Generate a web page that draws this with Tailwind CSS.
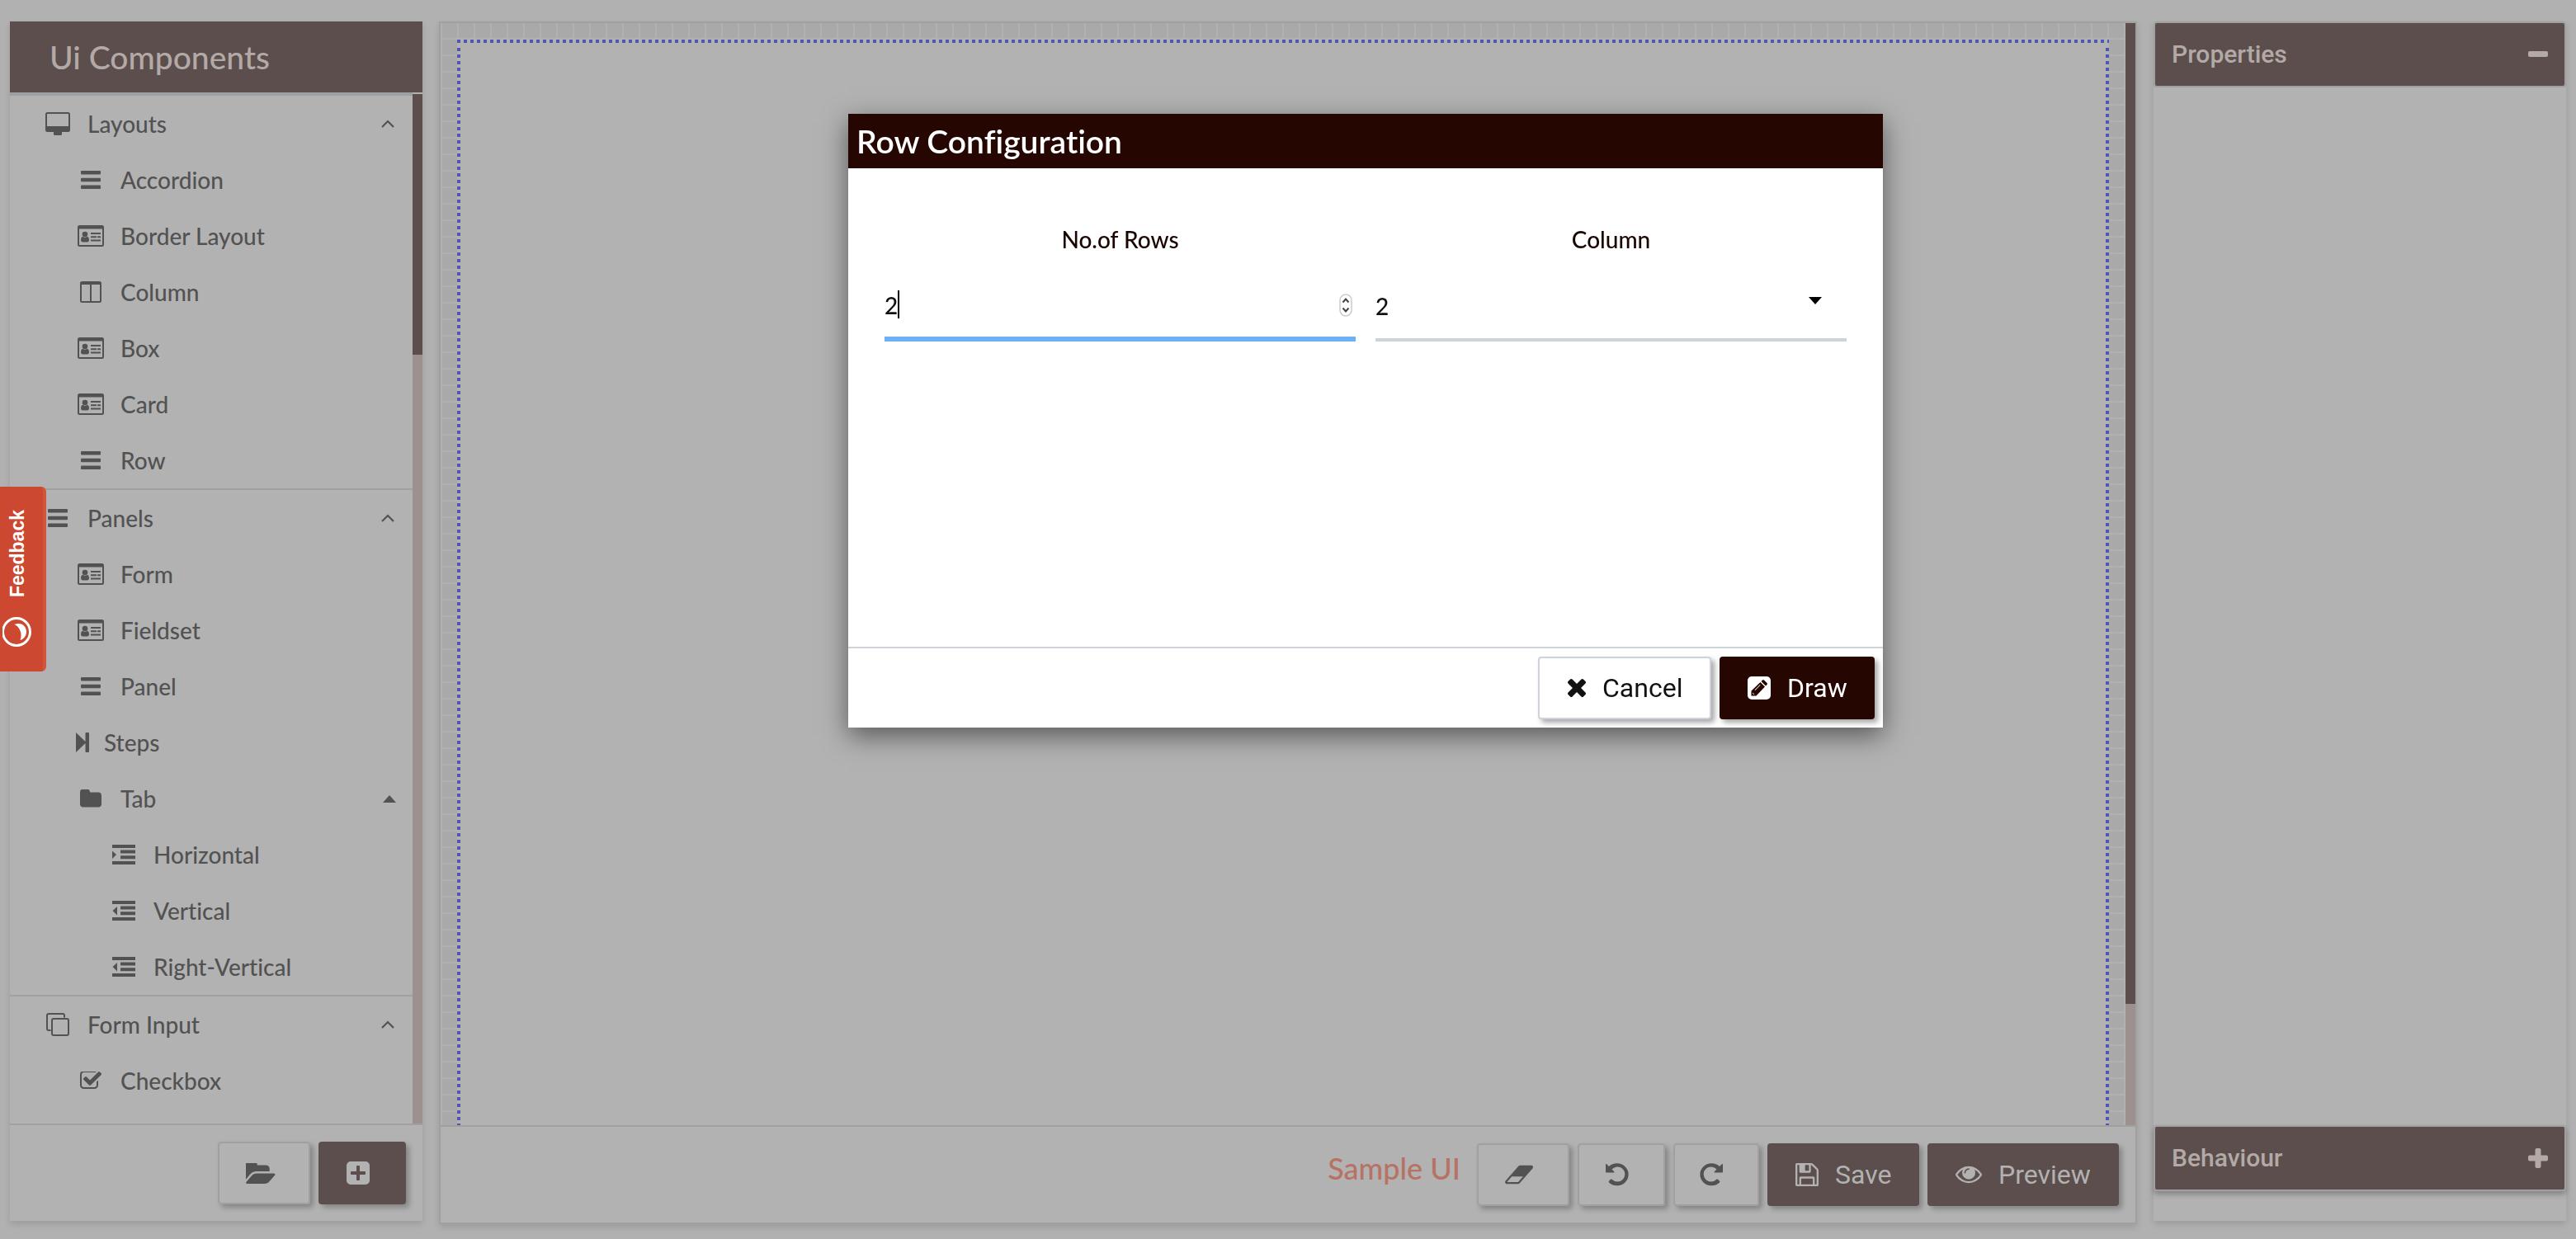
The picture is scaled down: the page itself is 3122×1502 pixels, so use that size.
<!DOCTYPE html>
<html lang="en">
<head>
<meta charset="utf-8">
<title>Ui Components</title>
<script src="https://cdn.jsdelivr.net/npm/@tailwindcss/browser@4"></script>
</head>
<body class="h-screen overflow-hidden bg-[#b1b1b1] font-['Lato',sans-serif] text-[28px] leading-9 font-medium text-[#525252] [font-variant-ligatures:none]">

<svg class="hidden" aria-hidden="true">
  <symbol id="bars" viewBox="0 0 24 24"><rect y="1" width="24" height="4.4" rx="1"/><rect y="9.8" width="24" height="4.4" rx="1"/><rect y="18.6" width="24" height="4.4" rx="1"/></symbol>
  <symbol id="desktop" viewBox="0 0 30 28"><path fill-rule="evenodd" d="M2.5 0h25A2.5 2.5 0 0 1 30 2.500v19a2.500 2.500 0 0 1-2.500 2.500H20v2.500q0 1.500-1.500 1.500h-7q-1.500 0-1.500-1.500V24H2.500A2.500 2.500 0 0 1 0 21.500v-19A2.500 2.500 0 0 1 2.500 0zM2.500 2q-.5 0-.5.500V17h26V2.500q0-.5-.5-.5z"/></symbol>
  <symbol id="card" viewBox="0 0 32 26"><path fill-rule="evenodd" d="M2.500 0h27A2.500 2.500 0 0 1 32 2.500v21a2.500 2.500 0 0 1-2.500 2.500h-27A2.500 2.500 0 0 1 0 23.500v-21A2.500 2.500 0 0 1 2.500 0zM2 4.500V23.500q0 .5.5.5h27q.5 0 .5-.5v-19z"/><circle cx="9" cy="11" r="3.300"/><path d="M6.200 13.800q2.800 2 5.600 0 2.200.7 2.200 3.700 0 3-2.500 3h-5Q4 20.500 4 17.500q0-3 2.200-3.700zM16 9h12v2H16zM16 13.300h7v2h-7zM24 13.300h4v2h-4zM16 17.500h12v2H16z"/></symbol>
  <symbol id="columns" viewBox="0 0 26 26"><path fill-rule="evenodd" d="M2.500 0h21A2.500 2.500 0 0 1 26 2.500v21a2.500 2.500 0 0 1-2.500 2.500h-21A2.500 2.500 0 0 1 0 23.500v-21A2.500 2.500 0 0 1 2.500 0zM2 4V23.500q0 .5.500.500h9.500V4zM14 4v20h9.500q.5 0 .5-.5V4z"/></symbol>
  <symbol id="step" viewBox="0 0 16 24"><path d="M0 0l11.500 11V1q0-1 1-1H15q1 0 1 1v22q0 1-1 1h-2.500q-1 0-1-1V13L0 24z"/></symbol>
  <symbol id="folder" viewBox="64 192 1664 1344"><path d="M1728 608v704q0 92-66 158t-158 66h-1216q-92 0-158-66t-66-158v-960q0-92 66-158t158-66h320q92 0 158 66t66 158v32h672q92 0 158 66t66 158z"/></symbol>
  <symbol id="indent" viewBox="0 0 28 24"><path d="M0 0h28v4H0zM10 6.600h18v4H10zM10 13.300h18v4H10zM0 20h28v4H0zM0 7.500l5 4.500-5 5z"/></symbol>
  <symbol id="outdent" viewBox="0 0 28 24"><path d="M0 0h28v4H0zM10 6.600h18v4H10zM10 13.300h18v4H10zM0 20h28v4H0zM6 7v10.500L.5 12z"/></symbol>
  <symbol id="clone" viewBox="0 0 28 28"><path fill="none" stroke="currentColor" stroke-width="2" d="M5.500 21H3q-2 0-2-2V3q0-2 2-2h17q2 0 2 2v2.500M9 7h16q2 0 2 2v16q0 2-2 2H9q-2 0-2-2V9q0-2 2-2z"/></symbol>
  <symbol id="check" viewBox="64 256 1664 1280"><path d="M1472 930v318q0 119-84.500 203.500t-203.500 84.500h-832q-119 0-203.500-84.500t-84.500-203.500v-832q0-119 84.500-203.500t203.500-84.500h832q63 0 117 25 15 7 18 23 3 17-9 29l-49 49q-10 10-23 10-3 0-9-2-23-6-45-6h-832q-66 0-113 47t-47 113v832q0 66 47 113t113 47h832q66 0 113-47t47-113v-254q0-13 9-22l64-64q10-10 23-10 6 0 12 3 20 8 20 29zm231-489l-814 814q-24 24-57 24t-57-24l-430-430q-24-24-24-57t24-57l110-110q24-24 57-24t57 24l263 263 647-647q24-24 57-24t57 24l110 110q24 24 24 57t-24 57z"/></symbol>
  <symbol id="chevron" viewBox="0 0 16 10"><path fill="none" stroke="currentColor" stroke-width="2.200" d="M1 9l7-7 7 7"/></symbol>
  <symbol id="folder-open" viewBox="0 256 1844 1280"><path d="M1815 952q0 31-31 66l-336 396q-43 51-120.500 86.500t-143.500 35.500h-1088q-34 0-60.500-13t-26.500-43q0-31 31-66l336-396q43-51 120.500-86.500t143.500-35.500h1088q34 0 60.500 13t26.500 43zm-343-344v160h-832q-94 0-197 47.500t-164 119.500l-337 396-5 6q0-4-.5-12.500t-.5-12.500v-960q0-92 66-158t158-66h320q92 0 158 66t66 158v32h544q92 0 158 66t66 158z"/></symbol>
  <symbol id="plus-square" viewBox="0 0 28 28"><path fill-rule="evenodd" d="M5 0h18a5 5 0 0 1 5 5v18a5 5 0 0 1-5 5H5a5 5 0 0 1-5-5V5a5 5 0 0 1 5-5zM12 6v6H6q-1 0-1 1v2q0 1 1 1h6v6q0 1 1 1h2q1 0 1-1v-6h6q1 0 1-1v-2q0-1-1-1h-6V6q0-1-1-1h-2q-1 0-1 1z"/></symbol>
  <symbol id="eraser" viewBox="58 256 1926 1280"><path d="M960 1408l336-384h-768l-336 384h768zm1013-1077q15 34 9.500 71.500t-30.500 65.500l-896 1024q-38 44-96 44h-768q-38 0-69.500-20.500t-47.500-54.500q-15-34-9.500-71.500t30.500-65.500l896-1024q38-44 96-44h768q38 0 69.500 20.500t47.500 54.500z"/></symbol>
  <symbol id="undo" viewBox="0 0 28 28"><path d="M0 1.800Q0 .3 1.200 1.300L4 4A14 13.500 0 1 1 4.200 23.800Q3 22.600 4.200 21.400L6 19.700Q7 18.900 8 19.900A9 9 0 1 0 7.500 7.600L10 10Q11 11.500 9.500 11.500H1Q0 11.500 0 10.500z"/></symbol>
  <symbol id="save" viewBox="128 128 1536 1536"><path d="M512 1536h768v-384h-768v384zm896 0h128v-896q0-14-10-38.500t-20-34.500l-281-281q-10-10-34-20t-39-10v416q0 40-28 68t-68 28h-576q-40 0-68-28t-28-68v-416h-128v1280h128v-416q0-40 28-68t68-28h832q40 0 68 28t28 68v416zm-384-928v-320q0-13-9.500-22.500t-22.500-9.500h-192q-13 0-22.500 9.500t-9.500 22.500v320q0 13 9.500 22.500t22.500 9.500h192q13 0 22.500-9.500t9.500-22.500zm640 32v928q0 40-28 68t-68 28h-1344q-40 0-68-28t-28-68v-1344q0-40 28-68t68-28h928q40 0 88 20t76 48l280 280q28 28 48 76t20 88z"/></symbol>
  <symbol id="eye" viewBox="0 384 1792 1152"><path d="M1664 960q-152-236-381-353 61 104 61 225 0 185-131.500 316.500t-316.500 131.500-316.500-131.500-131.500-316.500q0-121 61-225-229 117-381 353 133 205 333.500 326.500t434.500 121.500 434.500-121.500 333.500-326.500zm-720-384q0-20-14-34t-34-14q-125 0-214.500 89.500t-89.500 214.500q0 20 14 34t34 14 34-14 14-34q0-86 61-147t147-61q20 0 34-14t14-34zm848 384q0 34-20 69-140 230-376.500 368.500t-499.500 138.500-499.500-139-376.500-368q-20-35-20-69t20-69q140-229 376.500-368t499.500-139 499.500 139 376.500 368q20 35 20 69z"/></symbol>
  <symbol id="times" viewBox="302 366 1188 1188"><path d="M1490 1322q0 40-28 68l-136 136q-28 28-68 28t-68-28l-294-294-294 294q-28 28-68 28t-68-28l-136-136q-28-28-28-68t28-68l294-294-294-294q-28-28-28-68t28-68l136-136q28-28 68-28t68 28l294 294 294-294q28-28 68-28t68 28l136 136q28 28 28 68t-28 68l-294 294 294 294q28 28 28 68z"/></symbol>
  <symbol id="pencil" viewBox="0 0 28 28"><path fill-rule="evenodd" d="M5 0h18a5 5 0 0 1 5 5v18a5 5 0 0 1-5 5H5a5 5 0 0 1-5-5V5a5 5 0 0 1 5-5zM4.500 17.500V23.500h6L21 12.500 15.500 7zM16.500 6L22 11.500l1.500-1.500q1-1 0-2L20 4.500q-1-1-2 0zM6 19.500l2.500 2.500H7.500l-1.500-1.500zM8.500 16.500l6.500-6.500.6.600-6.500 6.500z"/></symbol>
</svg>

<div class="flex h-full gap-5 px-3 pt-[26px] pb-[18px]">

  <!-- Component palette -->
  <aside class="mb-1 flex w-[500px] shrink-0 flex-col bg-[#b2b2b2] shadow-[0_4px_8px_rgba(0,0,0,0.12)]">
    <h1 class="bg-[#5c4e4c] px-12 py-[19px] text-[39px] leading-[48px] text-[#b3aaa8]">Ui Components</h1>
    <div class="flex min-h-0 flex-1">
      <nav class="min-w-0 flex-1 overflow-hidden border-t-4 border-[#9da0a2]">
        <section>
          <a href="#" class="flex h-[68px] items-center gap-[18px] pr-[22px] pl-10"><span class="flex w-9 justify-center"><svg class="h-7 w-[30px] fill-current"><use href="#desktop"/></svg></span>Layouts<svg class="ml-auto h-2.5 w-4"><use href="#chevron"/></svg></a>
          <a href="#" class="flex h-[68px] items-center gap-[18px] pl-20"><span class="flex w-9 justify-center"><svg class="size-6 fill-current"><use href="#bars"/></svg></span>Accordion</a>
          <a href="#" class="flex h-[68px] items-center gap-[18px] pl-20"><span class="flex w-9 justify-center"><svg class="h-[26px] w-8 fill-current"><use href="#card"/></svg></span>Border Layout</a>
          <a href="#" class="flex h-[68px] items-center gap-[18px] pl-20"><span class="flex w-9 justify-center"><svg class="size-[26px] fill-current"><use href="#columns"/></svg></span>Column</a>
          <a href="#" class="flex h-[68px] items-center gap-[18px] pl-20"><span class="flex w-9 justify-center"><svg class="h-[26px] w-8 fill-current"><use href="#card"/></svg></span>Box</a>
          <a href="#" class="flex h-[68px] items-center gap-[18px] pl-20"><span class="flex w-9 justify-center"><svg class="h-[26px] w-8 fill-current"><use href="#card"/></svg></span>Card</a>
          <a href="#" class="flex h-[68px] items-center gap-[18px] pl-20"><span class="flex w-9 justify-center"><svg class="size-6 fill-current"><use href="#bars"/></svg></span>Row</a>
        </section>
        <section class="border-t-2 border-[#a0a0a0]">
          <a href="#" class="flex h-[68px] items-center gap-[18px] pr-[22px] pl-10"><span class="flex w-9 justify-center"><svg class="size-6 fill-current"><use href="#bars"/></svg></span>Panels<svg class="ml-auto h-2.5 w-4"><use href="#chevron"/></svg></a>
          <a href="#" class="flex h-[68px] items-center gap-[18px] pl-20"><span class="flex w-9 justify-center"><svg class="h-[26px] w-8 fill-current"><use href="#card"/></svg></span>Form</a>
          <a href="#" class="flex h-[68px] items-center gap-[18px] pl-20"><span class="flex w-9 justify-center"><svg class="h-[26px] w-8 fill-current"><use href="#card"/></svg></span>Fieldset</a>
          <a href="#" class="flex h-[68px] items-center gap-[18px] pl-20"><span class="flex w-9 justify-center"><svg class="size-6 fill-current"><use href="#bars"/></svg></span>Panel</a>
          <a href="#" class="flex h-[68px] items-center gap-[18px] pl-20"><svg class="h-6 w-4 fill-current"><use href="#step"/></svg>Steps</a>
          <a href="#" class="flex h-[68px] items-center gap-[18px] pr-5 pl-20"><span class="flex w-9 justify-center"><svg class="h-[22px] w-[26px] fill-current"><use href="#folder"/></svg></span>Tab<svg class="ml-auto h-[9px] w-4 fill-current" viewBox="0 0 16 9"><path d="M8 0l8 9H0z"/></svg></a>
          <a href="#" class="flex h-[68px] items-center gap-[18px] pl-[120px]"><span class="flex w-9 justify-center"><svg class="h-6 w-7 fill-current"><use href="#indent"/></svg></span>Horizontal</a>
          <a href="#" class="flex h-[68px] items-center gap-[18px] pl-[120px]"><span class="flex w-9 justify-center"><svg class="h-6 w-7 fill-current"><use href="#outdent"/></svg></span>Vertical</a>
          <a href="#" class="flex h-[68px] items-center gap-[18px] pl-[120px]"><span class="flex w-9 justify-center"><svg class="h-6 w-7 fill-current"><use href="#outdent"/></svg></span>Right-Vertical</a>
        </section>
        <section class="border-t-2 border-[#a0a0a0]">
          <a href="#" class="flex h-[68px] items-center gap-[18px] pr-[22px] pl-10"><span class="flex w-9 justify-center"><svg class="size-7"><use href="#clone"/></svg></span>Form Input<svg class="ml-auto h-2.5 w-4"><use href="#chevron"/></svg></a>
          <a href="#" class="flex h-[68px] items-center gap-[18px] pl-20"><span class="flex w-9 justify-center"><svg class="h-[22px] w-[26px] fill-current"><use href="#check"/></svg></span>Checkbox</a>
        </section>
      </nav>
      <div class="mt-0.5 w-3 bg-[#9c918f]"><div class="h-[316px] bg-[#5c4e4c]"></div></div>
    </div>
    <footer class="flex justify-end gap-2.5 border-t-2 border-[#a0a0a0] p-5">
      <button aria-label="Open" class="flex h-[76px] w-28 items-center rounded border-2 border-[#a0a0a0] pl-8 shadow-[4px_4px_6px_rgba(0,0,0,0.25)]"><svg class="h-[25px] w-9 fill-current"><use href="#folder-open"/></svg></button>
      <button aria-label="Add" class="flex h-[76px] w-[106px] items-center rounded bg-[#5c4e4c] pl-[34px] text-[#b2b2b2] shadow-[4px_4px_6px_rgba(0,0,0,0.25)]"><svg class="size-7 fill-current"><use href="#plus-square"/></svg></button>
    </footer>
  </aside>

  <!-- Design canvas -->
  <main class="flex min-w-0 flex-1 flex-col border-2 border-[#a0a0a0] bg-[#b2b2b2] shadow-[0_4px_8px_rgba(0,0,0,0.12)]">
    <div class="flex min-h-0 flex-1">
      <div class="flex flex-1 flex-col bg-[#a9a9a9] bg-[linear-gradient(90deg,#b1b1b1_2px,transparent_2px),linear-gradient(180deg,transparent_18px,#b1b1b1_18px)] bg-[size:20px_20px] px-5 pt-5">
        <div class="flex flex-1 flex-col bg-[#b2b2b2]">
          <div class="h-1 bg-[repeating-linear-gradient(90deg,#4c58b4_0_4px,transparent_4px_8px)]"></div>
          <div class="mt-0.5 flex flex-1 justify-between">
            <div class="w-1 bg-[repeating-linear-gradient(180deg,transparent_0_4px,#4c58b4_4px_8px)]"></div>
            <div class="w-1 bg-[repeating-linear-gradient(180deg,transparent_0_4px,#4c58b4_4px_8px)]"></div>
          </div>
        </div>
      </div>
      <div class="w-3 bg-[#9c918f]"><div class="h-[89%] bg-[#5c4e4c]"></div></div>
    </div>
    <footer class="flex justify-end gap-2.5 border-t-2 border-[#a0a0a0] p-5 font-[Roboto,sans-serif] text-[32px] font-normal">
      <span class="mr-2.5 pt-2 font-['Lato',sans-serif] text-[36px] leading-[44px] font-medium text-[#b67365]">Sample UI</span>
      <button aria-label="Clear" class="flex h-[76px] w-28 items-center rounded border-2 border-[#a0a0a0] pl-8 shadow-[4px_4px_6px_rgba(0,0,0,0.25)]"><svg class="h-6 w-[34px] fill-current"><use href="#eraser"/></svg></button>
      <button aria-label="Undo" class="flex h-[76px] w-[106px] items-center rounded border-2 border-[#a0a0a0] pl-8 shadow-[4px_4px_6px_rgba(0,0,0,0.25)]"><svg class="size-7 fill-current"><use href="#undo"/></svg></button>
      <button aria-label="Redo" class="flex h-[76px] w-[104px] items-center rounded border-2 border-[#a0a0a0] pl-[30px] shadow-[4px_4px_6px_rgba(0,0,0,0.25)]"><svg class="size-7 -scale-x-100 fill-current"><use href="#undo"/></svg></button>
      <button class="flex h-[76px] w-[184px] items-center gap-5 rounded bg-[#5c4e4c] pl-[34px] text-[#b2b2b2] shadow-[4px_4px_6px_rgba(0,0,0,0.25)]"><svg class="size-7 fill-current"><use href="#save"/></svg>Save</button>
      <button class="flex h-[76px] w-[232px] items-center gap-5 rounded bg-[#5c4e4c] pl-[34px] text-[#b2b2b2] shadow-[4px_4px_6px_rgba(0,0,0,0.25)]"><svg class="h-[22px] w-8 fill-current"><use href="#eye"/></svg>Preview</button>
    </footer>
  </main>

  <!-- Inspector accordion -->
  <aside class="mb-1 flex w-[500px] shrink-0 flex-col justify-between bg-[#b2b2b2] pb-9 font-[Roboto,sans-serif] text-[30px] text-[#b3aaa8] shadow-[0_4px_8px_rgba(0,0,0,0.12)]">
    <button class="flex h-20 items-center justify-between rounded-sm border-2 border-[#a0a0a0] bg-[#5c4e4c] px-5">Properties<svg class="size-6 fill-current" viewBox="0 0 24 24"><rect y="8" width="24" height="7" rx="2"/></svg></button>
    <button class="flex h-20 items-center justify-between rounded-sm border-2 border-[#a0a0a0] bg-[#5c4e4c] px-5 shadow-[0_4px_6px_rgba(0,0,0,0.25)]">Behaviour<svg class="size-6 fill-current" viewBox="0 0 24 24"><rect y="8.500" width="24" height="7" rx="2"/><rect x="8.500" width="7" height="24" rx="2"/></svg></button>
  </aside>
</div>

<!-- Feedback tab -->
<button class="fixed top-[590px] left-0 flex h-56 w-14 flex-col items-center gap-6 rounded-r-md border-r-4 border-[#d4543a] bg-[#cc4830] pt-7 pr-2.5 font-['Liberation_Sans',sans-serif] text-[23px] leading-6 font-bold text-white">
  <span class="rotate-180 [writing-mode:vertical-rl]">Feedback</span>
  <svg class="size-9 shrink-0" viewBox="0 0 36 36"><circle cx="17" cy="18" r="16.500" fill="none" stroke="#fff" stroke-width="3"/><path fill="#fff" d="M14.500 9C23 5.500 29 11 29 18c0 5-3.500 9-7.500 10C24.500 20 21 12 14.500 9z"/></svg>
</button>

<!-- Row configuration dialog -->
<div role="dialog" aria-labelledby="dialog-title" class="fixed top-[138px] left-[1028px] flex h-[744px] w-[1254px] flex-col bg-white shadow-[0_10px_30px_rgba(0,0,0,0.5)]">
  <h2 id="dialog-title" class="bg-[#260601] px-2.5 py-[9px] text-[39px] leading-[48px] font-semibold text-white">Row Configuration</h2>
  <form class="grid flex-1 grid-cols-2 content-start gap-x-6 px-11 pt-[68px] text-[#111]">
    <div class="flex flex-col gap-6">
      <label for="rows" class="text-center text-[#1a0400]">No.of Rows</label>
      <div class="relative">
        <input id="rows" type="number" value="2" class="block h-[82px] w-full appearance-none border-b-6 border-[#6cb1f6] bg-transparent caret-transparent outline-none [&::-webkit-inner-spin-button]:appearance-none">
        <span class="absolute top-5 left-4 h-[34px] w-0.5 bg-black"></span>
        <svg class="absolute top-6 right-1 h-7 w-4" viewBox="0 0 16 28" fill="none"><rect x="1" y="1" width="14" height="26" rx="7" fill="#fff" stroke="#ccc" stroke-width="1.500"/><path d="M4.500 10.500L8 6.500l3.500 4M4.500 17.500l3.500 4 3.500-4" stroke="#444" stroke-width="2"/></svg>
      </div>
    </div>
    <div class="flex flex-col gap-6">
      <label for="cols" class="text-center text-[#1a0400]">Column</label>
      <div class="relative">
        <select id="cols" class="block h-[82px] w-full appearance-none border-b-4 border-[#cdd3d8] bg-transparent outline-none"><option>2</option></select>
        <svg class="pointer-events-none absolute top-7 right-[30px] h-[9px] w-4" viewBox="0 0 16 9"><path d="M0 0h16L8 9z"/></svg>
      </div>
    </div>
  </form>
  <div class="flex justify-end gap-2.5 border-t-2 border-[#cdd3d9] p-2.5 font-[Roboto,sans-serif] text-[32px] font-normal">
    <button class="flex h-[76px] w-[210px] items-center gap-5 rounded border-2 border-[#cdd3da] bg-white pl-[34px] text-[#111] shadow-[4px_4px_6px_rgba(0,0,0,0.35)]"><svg class="size-[22px] fill-current"><use href="#times"/></svg>Cancel</button>
    <button class="flex h-[76px] w-[188px] items-center gap-5 rounded bg-[#260601] pl-[34px] text-white shadow-[4px_4px_6px_rgba(0,0,0,0.35)]"><svg class="size-7 fill-current"><use href="#pencil"/></svg>Draw</button>
  </div>
</div>
</body>
</html>
